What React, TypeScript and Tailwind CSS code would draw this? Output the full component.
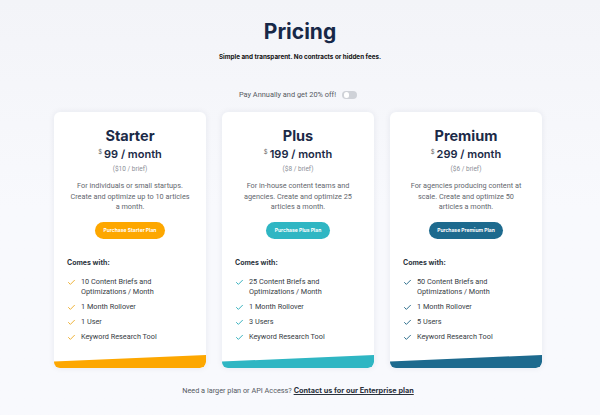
import { Check } from "lucide-react";

interface Plan {
  name: string;
  price: string;
  perBrief: string;
  desc: string[];
  button: string;
  color: string;
  features: string[][];
}

const plans: Plan[] = [
  {
    name: "Starter",
    price: "99",
    perBrief: "($10 / brief)",
    desc: ["For individuals or small startups.", "Create and optimize up to 10 articles", "a month."],
    button: "Purchase Starter Plan",
    color: "orange",
    features: [["10 Content Briefs and", "Optimizations / Month"], ["1 Month Rollover"], ["1 User"], ["Keyword Research Tool"]],
  },
  {
    name: "Plus",
    price: "199",
    perBrief: "($8 / brief)",
    desc: ["For in-house content teams and", "agencies. Create and optimize 25", "articles a month."],
    button: "Purchase Plus Plan",
    color: "teal",
    features: [["25 Content Briefs and", "Optimizations / Month"], ["1 Month Rollover"], ["3 Users"], ["Keyword Research Tool"]],
  },
  {
    name: "Premium",
    price: "299",
    perBrief: "($6 / brief)",
    desc: ["For agencies producing content at", "scale. Create and optimize 50", "articles a month."],
    button: "Purchase Premium Plan",
    color: "blue",
    features: [["50 Content Briefs and", "Optimizations / Month"], ["1 Month Rollover"], ["5 Users"], ["Keyword Research Tool"]],
  },
];

const accent: Record<string, { btn: string; bar: string; check: string }> = {
  orange: { btn: "bg-[#fda700]", bar: "bg-[#fda700]", check: "text-[#eeb032]" },
  teal: { btn: "bg-[#2fb6c3]", bar: "bg-[#2fb6c3]", check: "text-[#35b0bd]" },
  blue: { btn: "bg-[#1d6a8e]", bar: "bg-[#1d6a8e]", check: "text-[#2a6c8b]" },
};

function PlanCard({ plan }: { plan: Plan }) {
  const a = accent[plan.color];
  return (
    <div className="flex h-[256px] flex-col overflow-hidden rounded-[6px] bg-white shadow-[0_0_6px_rgba(30,40,80,0.08)]">
      <div className="flex flex-col items-center px-[13px] pt-[15px]">
        <div className="font-['Inter'] text-[14.5px] font-bold leading-[18px] text-[#1b2a47]">{plan.name}</div>
        <div className="mt-[2px] flex items-start font-['Inter'] text-[11px] font-semibold leading-[14px] text-[#1b2a47]">
          <span className="mr-[2px] text-[6px] font-normal leading-[9px] text-[#666]">$</span>
          {plan.price} / month
        </div>
        <div className="mt-[3.5px] font-['Roboto'] text-[6.5px] leading-[9px] text-[#8a8e96]">{plan.perBrief}</div>
        <div className="mt-[7.5px] text-center font-['Roboto'] text-[7.3px] leading-[10.5px] text-[#63676e]">
          {plan.desc.map((l) => (
            <div key={l}>{l}</div>
          ))}
        </div>
        <button
          type="button"
          className={`mt-[9.5px] h-[17px] rounded-full px-[8.5px] font-['Inter'] text-[5px] font-bold text-white ${a.btn}`}
        >
          {plan.button}
        </button>
      </div>
      <div className="px-[13px] pt-[19px]">
        <div className="font-['Inter'] text-[7px] font-bold leading-[10px] text-[#2c3440]">Comes with:</div>
        <div className="mt-[9px] flex flex-col gap-[5px]">
          {plan.features.map((f) => (
            <div key={f[0]} className="flex items-start">
              <Check className={`mt-[1px] h-[9px] w-[9px] shrink-0 ${a.check}`} strokeWidth={2.6} />
              <div className="ml-[5px] font-['Roboto'] text-[7.3px] leading-[10px] text-[#363b44]">
                {f.map((l) => (
                  <div key={l}>{l}</div>
                ))}
              </div>
            </div>
          ))}
        </div>
      </div>
      <div className={`mt-auto h-[13px] w-full rounded-br-[6px] [clip-path:polygon(0_50%,100%_0,100%_100%,0_100%)] ${a.bar}`} />
    </div>
  );
}

export default function App() {
  return (
    <div className="min-h-[415px] w-[600px] bg-gradient-to-b from-[#f3f4f8] via-[#f8f9fd] to-[#f8f9fd] to-[8%] pt-[19px] font-['Roboto',sans-serif]">
      <h1 className="text-center font-['Inter'] text-[21px] font-bold leading-[26px] text-[#172848]">Pricing</h1>
      <p className="mt-[7px] text-center font-['Inter'] text-[6.3px] font-bold leading-[10px] text-[#111]">
        Simple and transparent. No contracts or hidden fees.
      </p>
      <div className="mt-[28px] flex items-center justify-center gap-[6px] pr-[4px]">
        <span className="font-['Roboto'] text-[7.4px] leading-[10px] text-[#555a62]">Pay Annually and get 20% off!</span>
        <span className="flex h-[8px] w-[15px] items-center rounded-full bg-[#cfd2d8] px-[1.5px]">
          <span className="h-[5.5px] w-[5.5px] rounded-full bg-white" />
        </span>
      </div>
      <div className="ml-[54px] mt-[12px] grid w-[488px] grid-cols-3 gap-[16px]">
        {plans.map((p) => (
          <PlanCard key={p.name} plan={p} />
        ))}
      </div>
      <p className="mt-[18px] pr-[4px] text-center font-['Roboto'] text-[7.3px] leading-[10px] text-[#555a62]">
        Need a larger plan or API Access?{" "}
        <a className="font-['Inter'] font-bold text-[#2a313b] underline">Contact us for our Enterprise plan</a>
      </p>
    </div>
  );
}
